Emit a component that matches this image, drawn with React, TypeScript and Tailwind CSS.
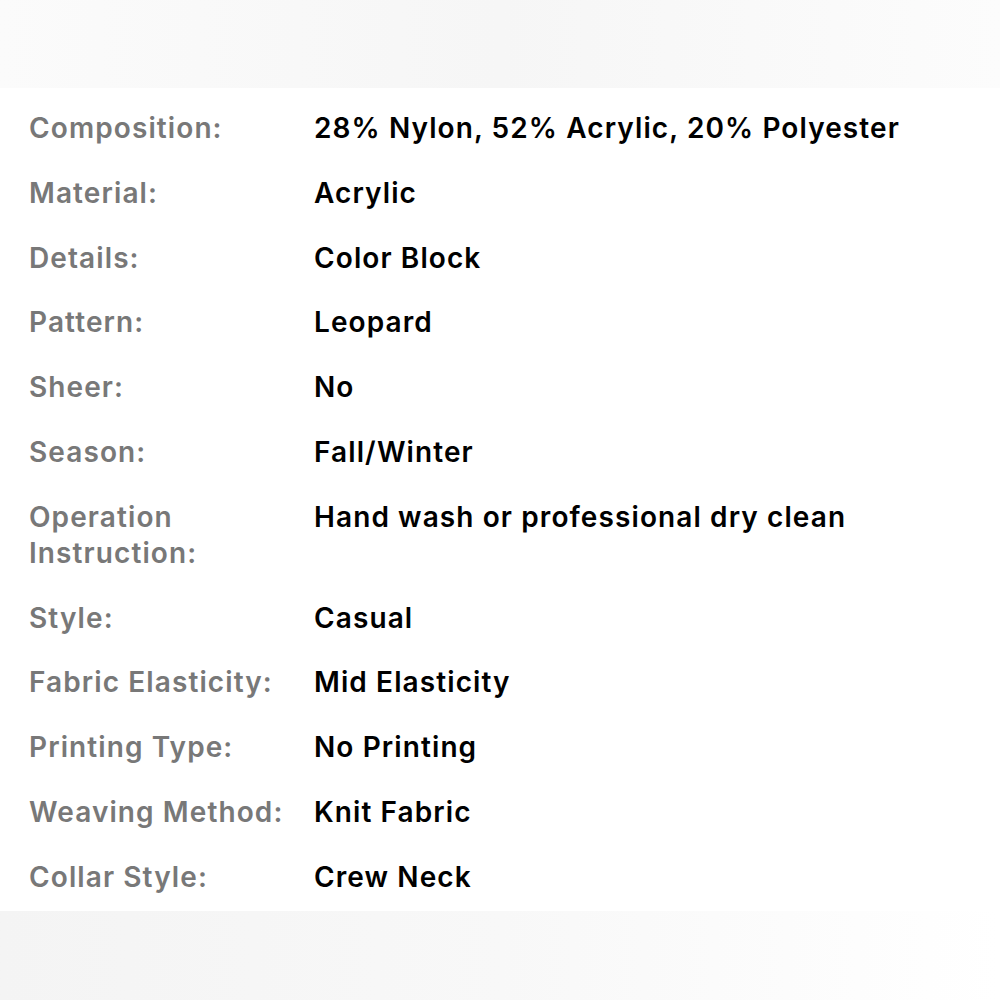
import React from 'react';

const rows: [string, string][] = [
  ['Composition:', '28% Nylon, 52% Acrylic, 20% Polyester'],
  ['Material:', 'Acrylic'],
  ['Details:', 'Color Block'],
  ['Pattern:', 'Leopard'],
  ['Sheer:', 'No'],
  ['Season:', 'Fall/Winter'],
  ['Operation Instruction:', 'Hand wash or professional dry clean'],
  ['Style:', 'Casual'],
  ['Fabric Elasticity:', 'Mid Elasticity'],
  ['Printing Type:', 'No Printing'],
  ['Weaving Method:', 'Knit Fabric'],
  ['Collar Style:', 'Crew Neck'],
];

const App = () => {
  return (
    <div className="w-[1000px] h-[1000px] bg-white flex flex-col overflow-hidden font-['Inter',sans-serif]">
      {/* top blur band */}
      <div className="h-[88px] shrink-0 bg-gradient-to-r from-[#fbfbfb] via-[#f6f6f6] to-[#fcfcfc]"></div>

      {/* spec table */}
      <div className="grid grid-cols-[285px_1fr] gap-y-[28.8px] pl-[29px] pt-[22px] pb-[16px] text-[28px] leading-[36px] font-semibold tracking-[1.1px]">
        {rows.map(([label, value]) => (
          <React.Fragment key={label}>
            <div className="text-[#787878]">{label}</div>
            <div className="text-black">{value}</div>
          </React.Fragment>
        ))}
      </div>

      {/* bottom blur band */}
      <div className="flex-1 bg-gradient-to-r from-[#f4f4f4] via-[#f8f8f8] to-white"></div>
    </div>
  );
};

export default App;
